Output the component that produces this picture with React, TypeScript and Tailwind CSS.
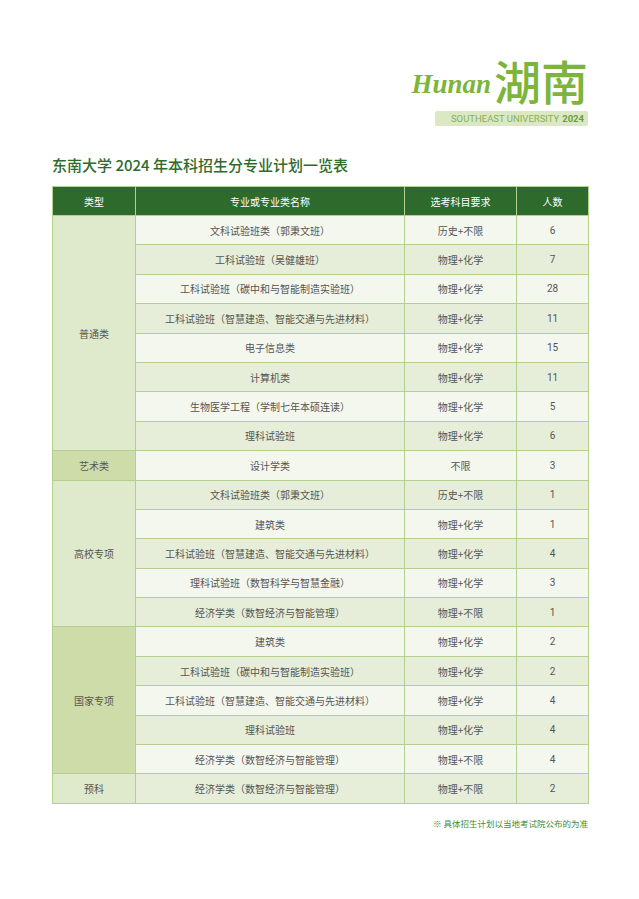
import React from "react";

type Row = { name: string; subj: string; num: string };

const groups: { type: string; dark: boolean; rows: Row[] }[] = [
  {
    type: "普通类",
    dark: false,
    rows: [
      { name: "文科试验班类（郭秉文班）", subj: "历史+不限", num: "6" },
      { name: "工科试验班（吴健雄班）", subj: "物理+化学", num: "7" },
      { name: "工科试验班（碳中和与智能制造实验班）", subj: "物理+化学", num: "28" },
      { name: "工科试验班（智慧建造、智能交通与先进材料）", subj: "物理+化学", num: "11" },
      { name: "电子信息类", subj: "物理+化学", num: "15" },
      { name: "计算机类", subj: "物理+化学", num: "11" },
      { name: "生物医学工程（学制七年本硕连读）", subj: "物理+化学", num: "5" },
      { name: "理科试验班", subj: "物理+化学", num: "6" },
    ],
  },
  {
    type: "艺术类",
    dark: true,
    rows: [{ name: "设计学类", subj: "不限", num: "3" }],
  },
  {
    type: "高校专项",
    dark: false,
    rows: [
      { name: "文科试验班类（郭秉文班）", subj: "历史+不限", num: "1" },
      { name: "建筑类", subj: "物理+化学", num: "1" },
      { name: "工科试验班（智慧建造、智能交通与先进材料）", subj: "物理+化学", num: "4" },
      { name: "理科试验班（数智科学与智慧金融）", subj: "物理+化学", num: "3" },
      { name: "经济学类（数智经济与智能管理）", subj: "物理+不限", num: "1" },
    ],
  },
  {
    type: "国家专项",
    dark: true,
    rows: [
      { name: "建筑类", subj: "物理+化学", num: "2" },
      { name: "工科试验班（碳中和与智能制造实验班）", subj: "物理+化学", num: "2" },
      { name: "工科试验班（智慧建造、智能交通与先进材料）", subj: "物理+化学", num: "4" },
      { name: "理科试验班", subj: "物理+化学", num: "4" },
      { name: "经济学类（数智经济与智能管理）", subj: "物理+不限", num: "4" },
    ],
  },
  {
    type: "预科",
    dark: false,
    rows: [{ name: "经济学类（数智经济与智能管理）", subj: "物理+不限", num: "2" }],
  },
];

const App: React.FC = () => {
  let idx = 0;
  return (
    <div
      className="w-[639px] h-[899px] bg-white"
      style={{ fontFamily: '"Noto Sans CJK SC", "Noto Sans", sans-serif' }}
    >
      {/* logo */}
      <div className="flex flex-col items-end pr-[51px] pt-[56px]">
        <div className="flex items-end leading-none">
          <span
            className="mb-[5px] mr-[3px] text-[27px] font-bold italic text-[#7db43c]"
            style={{ fontFamily: '"Liberation Serif", "DejaVu Serif", serif' }}
          >
            Hunan
          </span>
          <span className="text-[47px] font-medium leading-none text-[#7db43c]">湖南</span>
        </div>
        <div
          className="mt-[8px] flex h-[15px] w-[153px] items-center justify-end gap-[3px] rounded-[2px] bg-[#dce8c4] pr-[4px] text-[9.5px] leading-none text-[#86b152]"
          style={{ fontFamily: '"Roboto", "Liberation Sans", sans-serif' }}
        >
          <span>SOUTHEAST UNIVERSITY</span>
          <span className="font-bold text-[#6f9d3a]">2024</span>
        </div>
      </div>

      <div className="mt-[31px] pl-[52px] text-[15px] font-medium leading-none text-[#2f6b2c]">
        东南大学 2024 年本科招生分专业计划一览表
      </div>

      <table className="ml-[52px] mt-[14px] w-[536px] table-fixed border-collapse text-center text-[10px] text-[#555]">
        <colgroup>
          <col className="w-[83px]" />
          <col className="w-[269px]" />
          <col className="w-[112px]" />
          <col className="w-[72px]" />
        </colgroup>
        <thead>
          <tr className="h-[29px] bg-[#2d6a2b] text-white">
            <th className="border border-[#b5d08e] font-normal">类型</th>
            <th className="border border-[#b5d08e] font-normal">专业或专业类名称</th>
            <th className="border border-[#b5d08e] font-normal">选考科目要求</th>
            <th className="border border-[#b5d08e] font-normal">人数</th>
          </tr>
        </thead>
        <tbody>
          {groups.map((g) =>
            g.rows.map((r, i) => {
              const dark = idx++ % 2 === 1;
              return (
                <tr key={g.type + i} className={"h-[29.4px] " + (dark ? "bg-[#e6eed9]" : "bg-[#f4f7ee]")}>
                  {i === 0 && (
                    <td
                      rowSpan={g.rows.length}
                      className={"border border-[#b5d08e] " + (g.dark ? "bg-[#cddca9]" : "bg-[#dfe9cc]")}
                    >
                      {g.type}
                    </td>
                  )}
                  <td className="border border-[#b5d08e]">{r.name}</td>
                  <td className="border border-[#b5d08e]">{r.subj}</td>
                  <td
                    className="border border-[#b5d08e]"
                    style={{ fontFamily: '"Roboto", "Liberation Sans", sans-serif' }}
                  >
                    {r.num}
                  </td>
                </tr>
              );
            })
          )}
        </tbody>
      </table>

      <div className="mt-[13px] pr-[51px] text-right text-[8.5px] text-[#3f8a35]">
        ※ 具体招生计划以当地考试院公布的为准
      </div>
    </div>
  );
};

export default App;
